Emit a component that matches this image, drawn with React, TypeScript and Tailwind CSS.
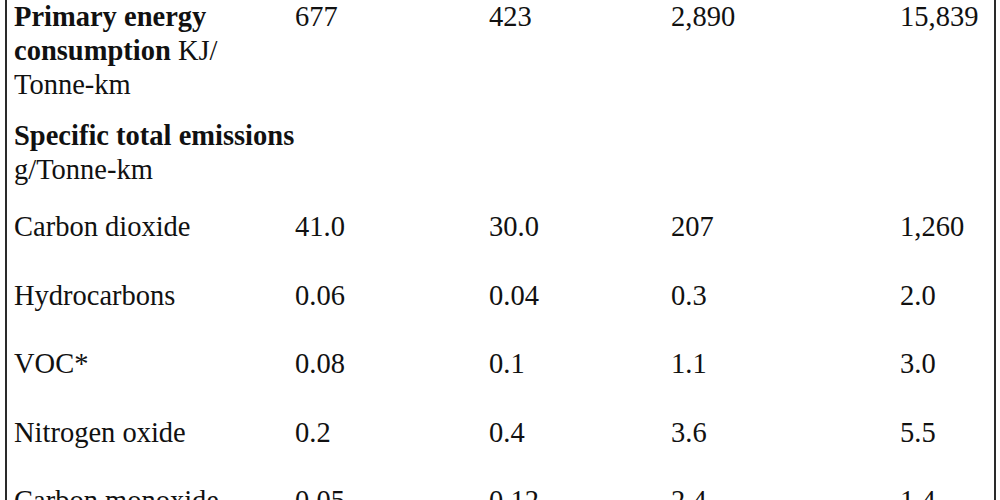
import React from "react";

const rows: [string, string, string, string, string][] = [
  ["Carbon dioxide", "41.0", "30.0", "207", "1,260"],
  ["Hydrocarbons", "0.06", "0.04", "0.3", "2.0"],
  ["VOC*", "0.08", "0.1", "1.1", "3.0"],
  ["Nitrogen oxide", "0.2", "0.4", "3.6", "5.5"],
  ["Carbon monoxide", "0.05", "0.12", "2.4", "1.4"],
];

const grid = "grid grid-cols-[281px_194px_182px_229px_1fr]";

export default function App() {
  return (
    <div className="w-[1000px] h-[500px] overflow-hidden bg-white">
      <div
        className="ml-[5px] w-[991px] h-[500px] border-l-2 border-r-2 border-[#2a2a2a] pl-[7px] text-[#111] text-[28.5px] leading-[34px]"
        style={{ fontFamily: '"Liberation Serif", "Times New Roman", serif' }}
      >
        <div className={`${grid} pb-[8px]`}>
          <div className="whitespace-nowrap">
            <span className="font-bold">Primary energy</span>
            <br />
            <span className="font-bold">consumption</span> KJ/
            <br />
            Tonne-km
          </div>
          <div>677</div>
          <div>423</div>
          <div>2,890</div>
          <div>15,839</div>
        </div>
        <div className={`${grid} pt-[9px] pb-[6px]`}>
          <div className="whitespace-nowrap">
            <span className="font-bold">Specific total emissions</span>
            <br />
            g/Tonne-km
          </div>
        </div>
        {rows.map((r) => (
          <div key={r[0]} className={`${grid} pt-[17px] pb-[17.5px]`}>
            {r.map((c, i) => (
              <div key={i} className="whitespace-nowrap">
                {c}
              </div>
            ))}
          </div>
        ))}
      </div>
    </div>
  );
}
